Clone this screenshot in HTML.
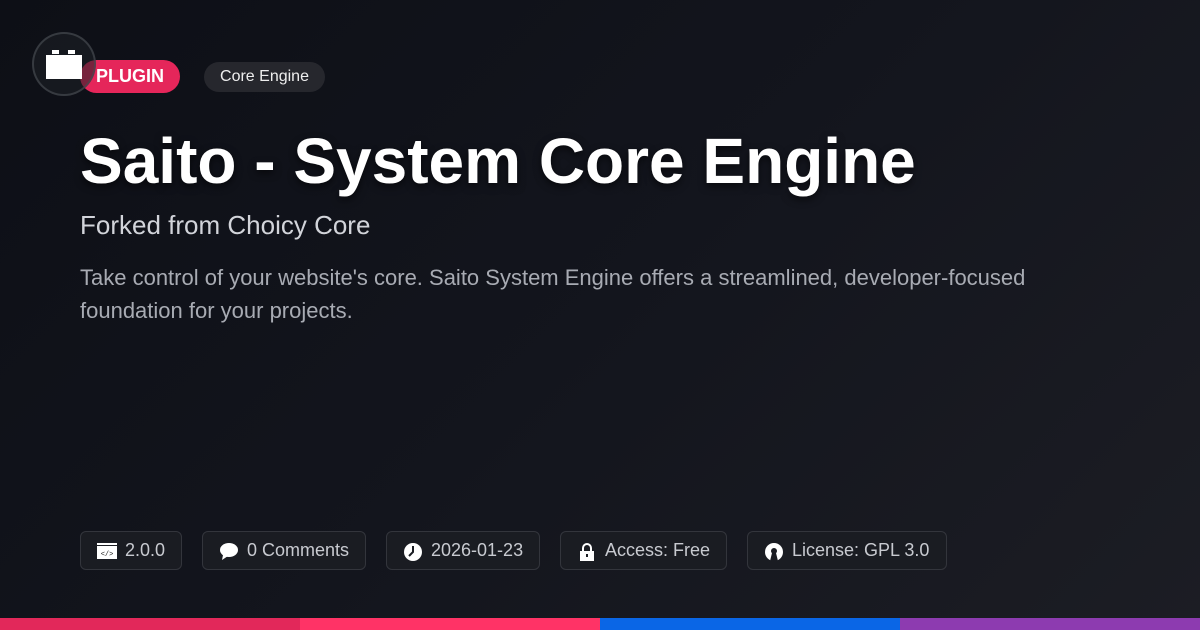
<!DOCTYPE html>
<html><head><style>
*{margin:0;padding:0;box-sizing:border-box}
body{width:1200px;height:630px;overflow:hidden;font-family:"Liberation Sans",sans-serif;background:linear-gradient(135deg,#0d0f16 0%,#13151d 50%,#1c1d24 100%);position:relative;color:#fff}
.logo{position:absolute;left:32px;top:32px;width:64px;height:64px;border-radius:50%;background:rgba(30,32,38,.55);border:2px solid rgba(70,72,78,.7);z-index:2}
.logo .b{position:absolute;left:12px;top:21px;width:36px;height:24px;background:#fff}
.logo .k1,.logo .k2{position:absolute;top:16px;width:7px;height:4px;background:#fff}
.k1{left:18px}.k2{left:34px}
.plugin{position:absolute;left:80px;top:60px;height:33px;width:100px;border-radius:17px;background:#e5265a;font-weight:bold;font-size:18px;line-height:33px;text-align:center}
.tag{position:absolute;left:204px;top:62px;height:30px;width:121px;border-radius:15px;background:#26272d;font-size:16px;line-height:30px;text-align:center;color:#eee}
h1{position:absolute;left:80px;top:124px;font-size:64px;font-weight:bold;text-shadow:0 3px 8px rgba(0,0,0,.6)}
.sub{position:absolute;left:80px;top:210px;font-size:26px;color:#d2d4da}
.desc{position:absolute;left:80px;top:261px;font-size:22px;line-height:33px;color:#a8abb3;width:1000px}
.badge{position:absolute;top:531px;height:39px;border:1px solid #33353c;border-radius:6px;background:#1a1c22;font-size:18px;color:#c8cad0;line-height:37px;padding-left:44px}
.badge svg{position:absolute;left:16px;top:10px}
.bar{position:absolute;top:618px;height:12px;width:300px}
</style></head><body>
<div class="logo"><div class="k1"></div><div class="k2"></div><div class="b"></div></div>
<div class="plugin">PLUGIN</div>
<div class="tag">Core Engine</div>
<h1>Saito - System Core Engine</h1>
<div class="sub">Forked from Choicy Core</div>
<div class="desc">Take control of your website's core. Saito System Engine offers a streamlined, developer-focused foundation for your projects.</div>
<div class="badge" style="left:80px;width:102px"><svg width="20" height="18"><rect x="0" y="1" width="20" height="16" fill="#fff"/><rect x="0" y="3" width="20" height="1" fill="#1a1c22"/><text x="10" y="14" font-size="7" fill="#222" text-anchor="middle" font-family="Liberation Mono">&lt;/&gt;</text></svg>2.0.0</div>
<div class="badge" style="left:202px;width:164px"><svg width="20" height="18"><ellipse cx="10" cy="8" rx="9" ry="7" fill="#fff"/><path d="M4 13 L3 18 L9 14z" fill="#fff"/></svg>0 Comments</div>
<div class="badge" style="left:386px;width:154px"><svg width="20" height="20"><circle cx="10" cy="10" r="9" fill="#fff"/><path d="M10 4 V10 L6 14" stroke="#1a1c22" stroke-width="2" fill="none"/></svg>2026-01-23</div>
<div class="badge" style="left:560px;width:167px"><svg width="20" height="20"><path d="M6 9 V6 a4 4 0 0 1 8 0 V9" stroke="#fff" stroke-width="2" fill="none"/><rect x="3" y="9" width="14" height="10" fill="#fff"/><rect x="9" y="12" width="2" height="3" fill="#1a1c22"/></svg>Access: Free</div>
<div class="badge" style="left:747px;width:200px"><svg width="20" height="20"><circle cx="10" cy="10" r="9" fill="#fff"/><circle cx="10" cy="9" r="3" fill="#1a1c22"/><path d="M8 11 L6 19 H14 L12 11z" fill="#1a1c22"/></svg>License: GPL 3.0</div>
<div class="bar" style="left:0;background:#e2285a"></div>
<div class="bar" style="left:300px;background:#ff3366"></div>
<div class="bar" style="left:600px;background:#0a66e6"></div>
<div class="bar" style="left:900px;background:#8d3bb0"></div>
</body></html>
